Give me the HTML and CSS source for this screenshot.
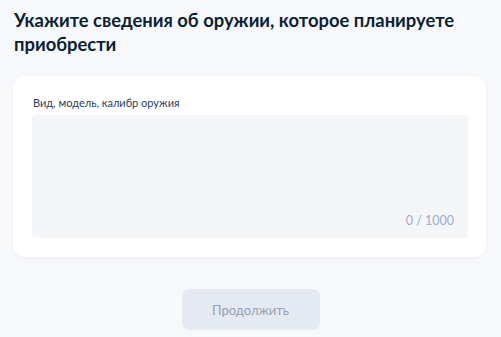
FILE: index.html
```html
<!DOCTYPE html>
<html lang="ru">
    <head>
        <meta charset="utf-8">
        <meta name="viewport" content="width=device-width, initial-scale=1.0">
        <title>Сведения об оружии</title>
        <link rel="stylesheet" href="styles.css">
    </head>
    <body>
        <div id="container">
            <h1>Укажите сведения об оружии, которое планируете приобрести</h1>
            <div class="card">
                <label class="label" for="weapon">Вид, модель, калибр оружия</label>
                <div class="field">
                    <textarea id="weapon"></textarea>
                    <span class="counter">0 / 1000</span>
                </div>
            </div>
            <div class="actions">
                <button class="next" disabled>Продолжить</button>
            </div>
        </div>
    </body>
</html>
```

FILE: styles.css
```css
body {
    margin: 0;
    background: #f6f8fc;
    font-family: Lato, "Noto Sans", sans-serif;
    color: #0b1f33;
}

#container {
    padding: 8px 15px 0 13px;
}

h1 {
    font-size: 18.4px;
    font-weight: 700;
    line-height: 24px;
    margin: 0 0 20px 1px;
}

.card {
    background: #fff;
    border-radius: 12px;
    padding: 20px 18px 19px 19px;
    box-shadow: 0 1px 4px rgba(11, 31, 51, 0.04);
}

.label {
    display: block;
    font-size: 11px;
    line-height: 14px;
    margin: 0 0 5px 1px;
    color: #233f5b;
}

.field {
    display: flex;
    flex-direction: column;
    height: 123px;
    background: #f4f5f9;
    border-radius: 4px;
    box-sizing: border-box;
    padding: 0 14px 10px 14px;
}

.field textarea {
    flex: 1;
    border: none;
    background: none;
    resize: none;
    outline: none;
    font: inherit;
}

.counter {
    align-self: flex-end;
    font-size: 12.5px;
    color: #9eaccb;
}

.actions {
    display: flex;
    justify-content: center;
    margin-top: 32px;
    padding-left: 2px;
}

.next {
    width: 138px;
    height: 41px;
    border: none;
    border-radius: 8px;
    background: #e4e9f2;
    color: #97a2b4;
    font-family: inherit;
    font-size: 13px;
}
```
